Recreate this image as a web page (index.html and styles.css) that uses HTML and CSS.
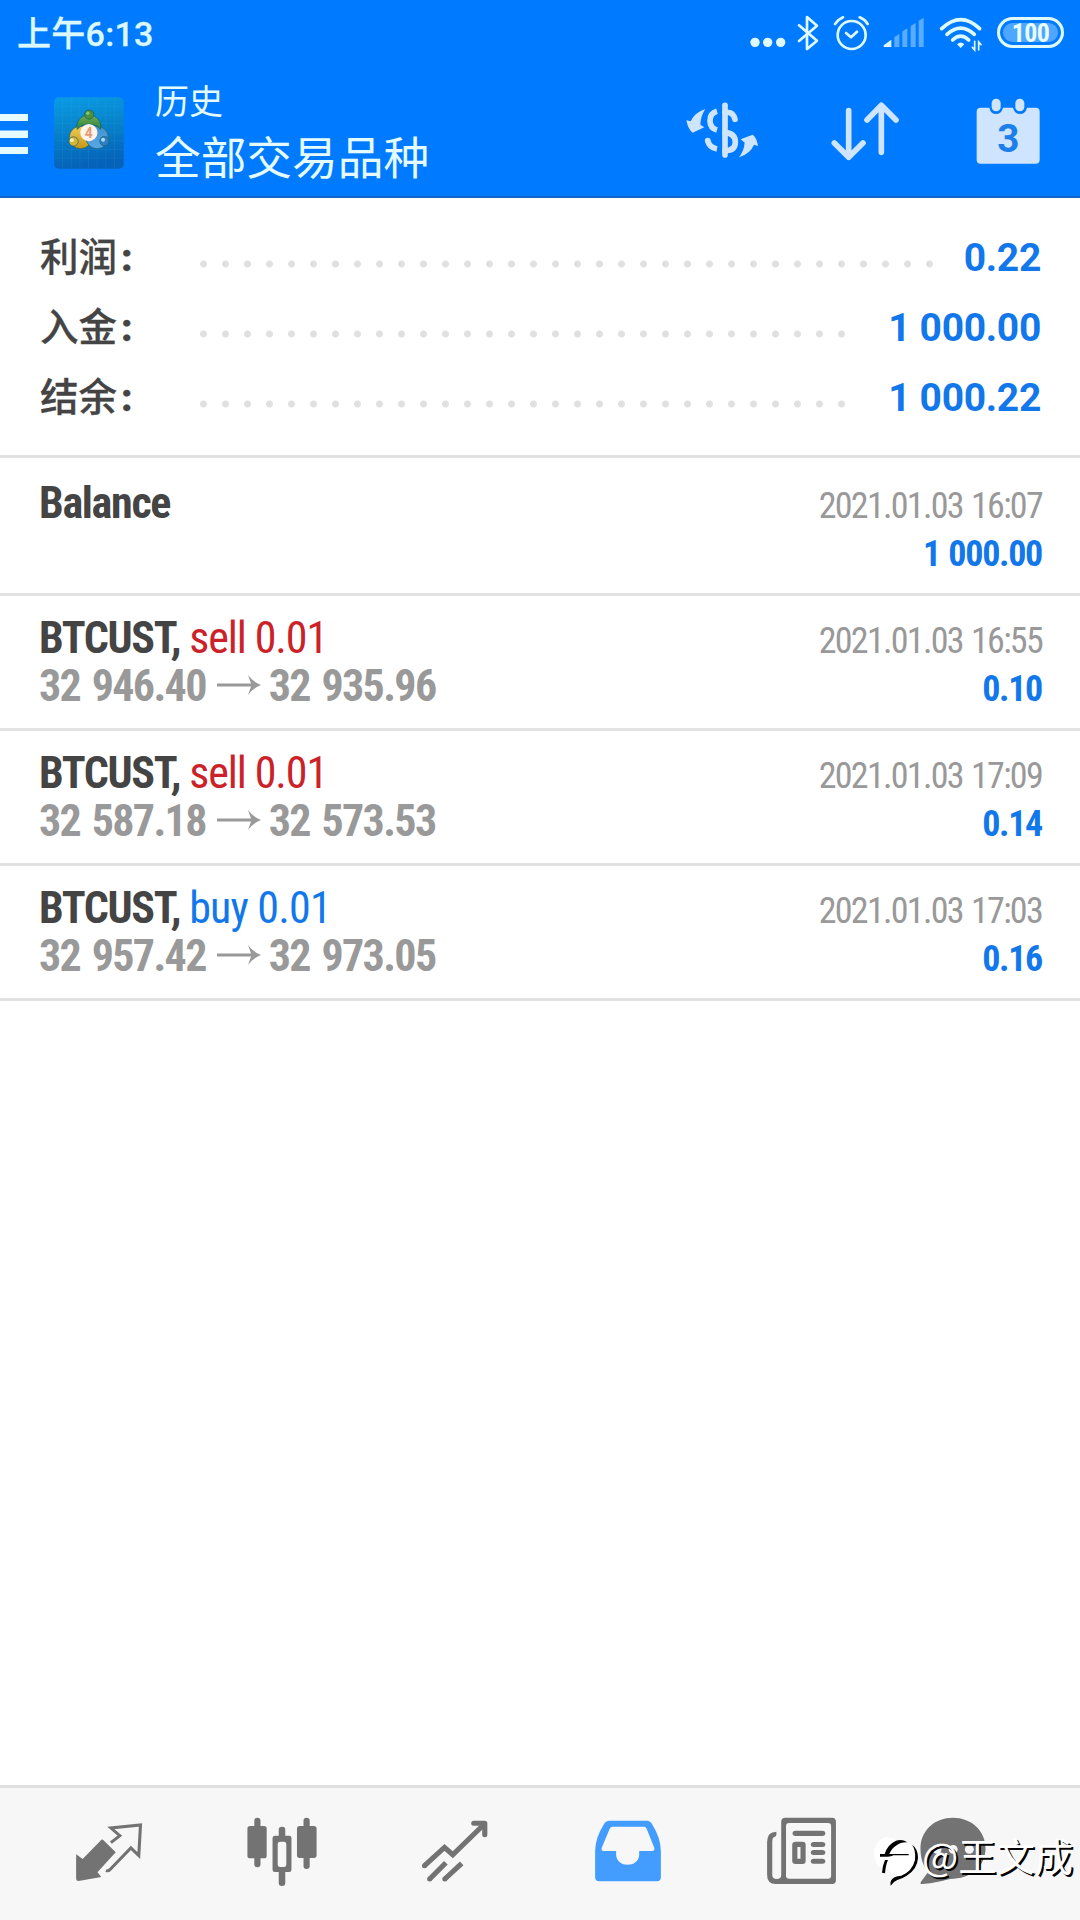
FILE: index.html
```html
<!DOCTYPE html>
<html lang="zh-CN">
<head>
<meta charset="utf-8">
<title>历史</title>
<link rel="stylesheet" href="styles.css">
</head>
<body>
<div class="screen">
  <header class="header">
    <div class="status">
      <span class="clock">上午6:13</span>
      <div class="status-icons">
        <svg class="dots-icon" width="42" height="64" viewBox="260 0 126 192"><circle cx="284" cy="127" r="14"/><circle cx="322" cy="127" r="14"/><circle cx="361" cy="127" r="14"/></svg>
        <svg width="32" height="64" viewBox="392 0 96 192" fill="none" stroke-width="8" stroke-linejoin="round" stroke-linecap="round"><path d="M416 76L470 122L440 147V51L470 77L416 123"/></svg>
        <svg width="40" height="64" viewBox="514 0 120 192" fill="none" stroke-width="8" stroke-linecap="round"><circle cx="576" cy="105" r="42"/><path d="M559 99L574 112L592 95" stroke-linejoin="round"/><path d="M526 72Q536 58 550 52M600 52Q615 58 624 72" stroke-width="8"/></svg>
        <svg width="46" height="64" viewBox="664 0 138 192" stroke="none"><path d="M669 141V136L692 119V141Z"/><g opacity=".4"><path d="M701 141V111L716 102V141ZM725 141V94L740 85V141ZM750 141V78L765 69V141ZM774 141V62L789 53V141Z"/></g></svg>
        <svg width="46" height="64" viewBox="832 0 138 192" fill="none" stroke-width="11" stroke-linecap="round"><path d="M843 86Q900 32 957 86M859 103Q900 66 941 103M876 120Q900 97 924 120"/><path d="M889 133Q900 122 911 133L900 144Z" stroke="none" fill="#dffaff"/><path d="M942 124V150L935 142M954 150V126L961 134" stroke-width="5"/></svg>
        <span class="battery">100</span>
      </div>
    </div>
    <div class="toolbar">
      <svg class="menu" width="28" height="46" viewBox="0 0 28 46"><path d="M0 3H28V10H0ZM0 19.500H28V27H0ZM0 36H28V43H0Z"/></svg>
      <svg class="logo" width="72" height="72" viewBox="159 290 213 217">
        <defs>
          <linearGradient id="bg" x1="0" y1="0" x2=".15" y2="1"><stop offset="0" stop-color="#0a9be6"/><stop offset=".45" stop-color="#0784cb"/><stop offset="1" stop-color="#0562b8"/></linearGradient>
          <linearGradient id="gr" x1="0" y1="0" x2="0" y2="1"><stop offset="0" stop-color="#6fae58"/><stop offset="1" stop-color="#2c8439"/></linearGradient>
          <linearGradient id="ye" x1="0" y1="0" x2="0" y2="1"><stop offset="0" stop-color="#e9cf58"/><stop offset="1" stop-color="#c79614"/></linearGradient>
          <linearGradient id="bl" x1="0" y1="0" x2="0" y2="1"><stop offset="0" stop-color="#3f95d0"/><stop offset="1" stop-color="#5aa6e4"/></linearGradient>
        </defs>
        <rect x="160" y="291" width="210" height="215" rx="14" fill="url(#bg)"/>
        <path d="M186 292V505M212 292V505M238 292V505M264 292V505M290 292V505M316 292V505M342 292V505M161 318H369M161 344H369M161 370H369M161 396H369M161 422H369M161 448H369M161 474H369" stroke="#48b8e6" stroke-opacity=".18" stroke-width="2"/>
        <g stroke="#1a5a62" stroke-width="2">
          <circle cx="240" cy="412" r="34" fill="url(#ye)"/>
          <circle cx="290" cy="412" r="34" fill="url(#bl)"/>
          <path d="M230 388A36 36 0 1 1 300 388Q290 372 265 372Q242 372 230 388Z" fill="url(#gr)"/>
          <circle cx="266" cy="343" r="14" fill="#49913b"/>
          <circle cx="219" cy="424" r="14" fill="#d4b53b"/>
          <circle cx="312" cy="423" r="14" fill="#2f7fc4"/>
        </g>
        <circle cx="214" cy="420" r="6" fill="#f6ecae"/><circle cx="308" cy="419" r="6" fill="#a8dcf6"/><circle cx="262" cy="339" r="5" fill="#8cc47a"/>
        <circle cx="265" cy="397" r="26" fill="#fff4ec"/>
        <text x="265" y="413" class="logo-num">4</text>
      </svg>
      <div class="titles">
        <div class="title-small">历史</div>
        <div class="title-main">全部交易品种</div>
      </div>
      <svg class="act-currency" width="85" height="80" viewBox="60 270 255 240" fill="none" stroke-width="17" stroke-linecap="round">
        <path d="M195 316V465"/><path d="M195 337Q220 334 225 358M195 398Q226 400 226 426T195 452"/>
        <path d="M171 334Q150 340 150 362T171 390M143 421Q147 443 171 447" stroke-linecap="butt"/><circle cx="143" cy="422" r="8.500" stroke="none" fill="#cfe5ff"/>
        <path d="M79 361L92 364Q103 338 136 327Q122 347 121 374L133 382L98 398Q85 390 79 361Z" fill="#cfe5ff" stroke="none"/>
        <path d="M294 438L282 434Q271 461 237 472Q252 452 254 428L242 418L278 404Q290 412 294 438Z" fill="#cfe5ff" stroke="none"/>
      </svg>
      <svg class="act-sort" width="80" height="80" viewBox="495 270 240 240" fill="none" stroke-width="17" stroke-linecap="round" stroke-linejoin="round"><path d="M566 332V472M523 429L566 472L609 429M664 457V316M621 360L664 316L708 360"/></svg>
      <svg class="act-calendar" width="75" height="80" viewBox="930 270 225 240">
        <path d="M962 323H988Q992 342 1008 342T1029 323H1059Q1064 342 1080 342T1101 323H1127Q1139 323 1139 335V479Q1139 491 1127 491H962Q950 491 950 479V335Q950 323 962 323Z"/>
        <rect x="995" y="296" width="27" height="38" rx="13"/><rect x="1066" y="296" width="27" height="38" rx="13"/>
        <text x="1045" y="456" class="cal-num">3</text>
      </svg>
    </div>
  </header>

  <section class="summary">
    <div class="sum-row"><span class="sum-label">利润<i>:</i></span><span class="leader"></span><span class="sum-value">0.22</span></div>
    <div class="sum-row"><span class="sum-label">入金<i>:</i></span><span class="leader"></span><span class="sum-value">1 000.00</span></div>
    <div class="sum-row"><span class="sum-label">结余<i>:</i></span><span class="leader"></span><span class="sum-value">1 000.22</span></div>
  </section>

  <main class="deals">
    <article class="deal deal-balance">
      <div class="line"><span class="symbol">Balance</span><time class="date">2021.01.03 16:07</time></div>
      <div class="line"><span class="prices">&nbsp;</span><span class="profit">1 000.00</span></div>
    </article>
    <article class="deal">
      <div class="line"><span class="symbol">BTCUST, <span class="sell">sell 0.01</span></span><time class="date">2021.01.03 16:55</time></div>
      <div class="line"><span class="prices">32 946.40<svg class="arrow" width="44" height="20" viewBox="0 0 44 20"><path d="M0 8.500H34L31 0Q36 7 44 10Q36 13 31 20L34 11.500H0Z"/></svg>32 935.96</span><span class="profit">0.10</span></div>
    </article>
    <article class="deal">
      <div class="line"><span class="symbol">BTCUST, <span class="sell">sell 0.01</span></span><time class="date">2021.01.03 17:09</time></div>
      <div class="line"><span class="prices">32 587.18<svg class="arrow" width="44" height="20" viewBox="0 0 44 20"><path d="M0 8.500H34L31 0Q36 7 44 10Q36 13 31 20L34 11.500H0Z"/></svg>32 573.53</span><span class="profit">0.14</span></div>
    </article>
    <article class="deal">
      <div class="line"><span class="symbol">BTCUST, <span class="buy">buy 0.01</span></span><time class="date">2021.01.03 17:03</time></div>
      <div class="line"><span class="prices">32 957.42<svg class="arrow" width="44" height="20" viewBox="0 0 44 20"><path d="M0 8.500H34L31 0Q36 7 44 10Q36 13 31 20L34 11.500H0Z"/></svg>32 973.05</span><span class="profit">0.16</span></div>
    </article>
  </main>

  <nav class="tabs">
    <svg width="74" height="80" viewBox="209 120 215 240" preserveAspectRatio="none"><path d="M299 209L336 247L283 307L294 321L228 333Q221 333 221 326V253L240 267L291 213Q295 208 299 209Z"/><path d="M322 218L348 197L322 174L408 165L403 257L380 234L319 299Q314 304 308 301" fill="none" stroke="#737373" stroke-width="9"/></svg>
    <svg width="74" height="80" viewBox="710 120 215 240" preserveAspectRatio="none"><rect x="717" y="168" width="56" height="97" rx="8"/><rect x="737" y="143" width="18" height="149" rx="9"/><rect x="861" y="168" width="57" height="96" rx="8"/><rect x="880" y="143" width="18" height="154" rx="9"/><rect x="808" y="170" width="19" height="40" rx="9"/><rect x="808" y="296" width="19" height="52" rx="9"/><path fill-rule="evenodd" d="M797 197H838Q845 197 845 204V299Q845 306 838 306H797Q790 306 790 299V204Q790 197 797 197ZM812 215Q805 215 805 222V284Q805 291 812 291H823Q830 291 830 284V222Q830 215 823 215Z"/></svg>
    <svg width="74" height="80" viewBox="1213 120 215 240" preserveAspectRatio="none" fill="none" stroke="#737373" stroke-width="15" stroke-linejoin="miter"><path d="M1232 287L1290 232L1314 254L1403 165M1247 327L1294 278M1291 327L1340 280"/><path d="M1375 160H1407V194" stroke-linecap="round" stroke-linejoin="round"/><path d="M1232 287h.01M1247 327h.01M1291 327h.01" stroke-linecap="round"/></svg>
    <svg width="74" height="80" viewBox="148 120 215 240" preserveAspectRatio="none"><path fill="#429dff" fill-rule="evenodd" d="M200 152H312Q319 152 324 160Q351 205 351 243V322Q351 334 339 334H172Q160 334 160 322V243Q160 205 187 160Q192 152 200 152ZM210 170Q205 170 202 177L179 234Q177 243 185 243H221V255C223 294 286 294 288 255V243H326Q334 242 332 234L310 177Q307 170 302 170Z"/></svg>
    <svg width="74" height="80" viewBox="650 120 215 240" preserveAspectRatio="none"><path fill-rule="evenodd" d="M712 143H848Q859 143 859 155V330Q859 342 848 342H684Q659 342 659 315V215Q659 185 686 185V195Q685 201 678 202Q674 205 674 215V315Q674 327 687 327Q700 327 700 315V155Q700 143 712 143ZM723 159Q714 159 714 169V317Q714 326 723 326H836Q845 326 845 317V169Q845 159 836 159Z"/><rect x="733" y="182" width="95" height="16" rx="8"/><path fill-rule="evenodd" d="M742 215H762Q771 215 771 224V273Q771 282 762 282H742Q732 282 732 273V224Q732 215 742 215ZM747 231V266H756V231Z"/><rect x="786" y="216" width="42" height="15" rx="8"/><rect x="786" y="240" width="42" height="15" rx="8"/><rect x="786" y="266" width="42" height="15" rx="8"/></svg>
    <svg width="74" height="80" viewBox="1091 120 215 240" preserveAspectRatio="none"><path d="M1198 143C1250 143 1293 180 1293 235S1250 327 1190 327C1165 333 1130 342 1108 342Q1102 342 1105 336L1127 305C1110 288 1104 262 1104 235C1104 180 1147 143 1198 143Z"/><g fill="#f7f7f7"><circle cx="1152" cy="238" r="13"/><circle cx="1199" cy="238" r="13"/><circle cx="1246" cy="238" r="13"/></g></svg>
  </nav>

  <div class="watermark">
    <svg width="48" height="54" viewBox="36 75 144 162">
      <ellipse cx="83" cy="130" rx="41" ry="48" fill="#fff"/><ellipse cx="120" cy="145" rx="48" ry="52" fill="#fff"/>
      <path d="M74 132Q82 104 108 92Q126 86 142 97Q122 96 110 106Q94 116 88 132H146V136H100Q88 142 60 140V132ZM75 150H84Q77 165 75 190L66 188Q67 168 75 150ZM156 104Q174 116 174 144Q172 178 140 197Q128 205 112 210Q98 216 92 227Q88 210 104 202Q112 198 124 197Q157 184 165 150Q168 120 156 104Z"/>
    </svg>
    <span>@王文成</span>
  </div>
</div>
</body>
</html>
```
FILE: styles.css
```css
* { box-sizing: border-box; }
body { margin: 0; font-family: Roboto, "Noto Sans CJK SC", sans-serif; background: #fff; }
svg { display: block; flex: none; }
.screen { position: relative; width: 1080px; height: 1920px; display: flex; flex-direction: column; overflow: hidden; background: #fff; }

.header { height: 198px; flex: none; background: #007aff; border-bottom: 2px solid #1167c8; }
.status { height: 64px; display: flex; justify-content: space-between; align-items: center; padding: 0 16px 0 17px; }
.clock { padding-top: 3px; color: #dcf8ff; font-size: 34px; font-weight: 500; line-height: 64px; letter-spacing: .3px; -webkit-text-stroke: .3px #dcf8ff; }
.status-icons { display: flex; align-items: center; fill: #dffaff; stroke: #dffaff; }
.dots-icon { stroke: none; }
.status-icons svg:nth-child(2) { margin-left: 2px; }
.status-icons svg:nth-child(3) { margin-left: 8px; }
.status-icons svg:nth-child(4) { margin-left: 11px; }
.status-icons svg:nth-child(5) { margin-left: 10px; }
.battery { width: 67px; height: 31px; margin-left: 13px; border: 3px solid #dffaff; border-radius: 16px; background: #4da6ff; box-shadow: inset 0 0 0 3px #007aff; color: #e6fcff; font-family: "Roboto Condensed", Roboto, sans-serif; font-size: 26px; font-weight: 700; line-height: 26px; text-align: center; letter-spacing: -.6px; }

.toolbar { height: 133px; display: flex; align-items: flex-start; }
.menu { margin-top: 47px; fill: #e6fbff; }
.logo { margin: 33px 0 0 25px; }
.logo-num { font-size: 42px; font-weight: 700; fill: #e59a72; text-anchor: middle; }
.titles { width: 525px; margin: 12px 0 0 30px; color: #e4fbff; font-family: "Noto Sans CJK SC", sans-serif; font-weight: 400; }
.title-small { font-size: 34px; line-height: 48px; }
.title-main { font-size: 45.7px; line-height: 62px; }
.act-currency { margin-top: 26px; stroke: #cfe5ff; }
.act-sort { margin: 26px 0 0 60px; stroke: #cfe5ff; }
.act-calendar { margin: 26px 0 0 65px; fill: #cfe5ff; }
.cal-num { font-size: 116px; font-weight: 700; fill: #1c7fea; text-anchor: middle; }

.summary { height: 260px; flex: none; padding: 25px 39px 0 40px; border-bottom: 3px solid #e2e2e2; }
.sum-row { height: 70px; display: flex; align-items: center; }
.sum-label { width: 152px; font-size: 38.5px; font-weight: 500; color: #444; line-height: 70px; -webkit-text-stroke: .3px #444; }
.sum-label i { font-style: normal; font-weight: 900; margin-left: 4px; }
.leader { flex: 1; height: 8px; margin: 11px 31px 0 0; background: radial-gradient(circle at 11.5px 4px, #e0e0e0 3px, transparent 4px) 0 0 / 22px 8px repeat-x; }
.sum-value { font-size: 39px; font-weight: 700; color: #1177ea; letter-spacing: -.3px; }

.deals { flex: 1; font-family: "Roboto Condensed", Roboto, sans-serif; font-stretch: 75%; }
.deal { height: 135px; padding: 18px 38px 0 39px; border-bottom: 3px solid #e2e2e2; }
.deal-balance { height: 138px; padding-top: 21px; }
.line { height: 48px; display: flex; justify-content: space-between; align-items: baseline; line-height: 48px; white-space: nowrap; }
.symbol { font-size: 44px; font-weight: 700; color: #444; letter-spacing: -1.3px; }
.sell, .buy { font-weight: 400; color: #cb2229; letter-spacing: -1.1px; }
.buy { color: #1177ea; letter-spacing: -.8px; }
.prices { font-size: 44px; font-weight: 700; color: #999; letter-spacing: -1.65px; word-spacing: 3px; }
.arrow { display: inline-block; margin: 0 8px 0 11px; vertical-align: 6px; fill: #999; }
.date { font-size: 36px; color: #999; letter-spacing: -1.7px; word-spacing: 1.6px; }
.profit { font-size: 36px; font-weight: 700; color: #1177ea; letter-spacing: -1.3px; word-spacing: 1.5px; }

.tabs { height: 135px; flex: none; display: grid; grid-template-columns: repeat(5, 173px) 131px; padding: 22px 0 0 22px; justify-items: center; background: #f7f7f7; border-top: 3px solid #e0e0e0; fill: #737373; }

.watermark { position: absolute; left: 872px; top: 1835px; display: flex; align-items: center; height: 54px; color: #fff; font-size: 38.3px; font-family: "Noto Sans CJK SC", sans-serif; text-shadow: 2px 2px 0 #000; white-space: nowrap; }
.watermark span { margin: -16px 0 0 2px; }
```
